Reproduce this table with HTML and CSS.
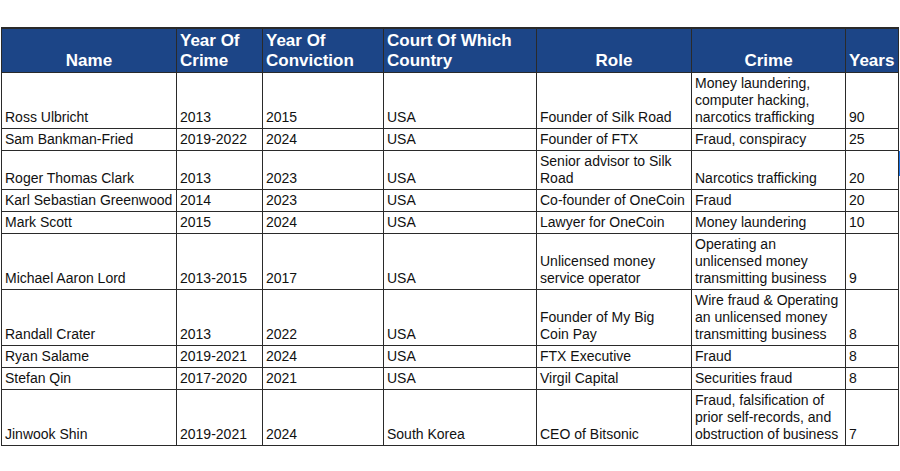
FILE: index.html
```html
<!DOCTYPE html>
<html lang="en">
<head>
<meta charset="utf-8">
<title>Crypto convictions</title>
<link rel="stylesheet" href="styles.css">
</head>
<body>
<div class="wrap">
<table class="sheet">
<colgroup>
<col class="c-name"><col class="c-yc"><col class="c-yv"><col class="c-court"><col class="c-role"><col class="c-crime"><col class="c-years">
</colgroup>
<thead>
<tr>
<th class="center">Name</th>
<th>Year Of<br>Crime</th>
<th>Year Of<br>Conviction</th>
<th>Court Of Which<br>Country</th>
<th class="center">Role</th>
<th class="center">Crime</th>
<th>Years</th>
</tr>
</thead>
<tbody>
<tr><td>Ross Ulbricht</td><td>2013</td><td>2015</td><td>USA</td><td>Founder of Silk Road</td><td>Money laundering,<br>computer hacking,<br>narcotics trafficking</td><td>90</td></tr>
<tr><td>Sam Bankman-Fried</td><td>2019-2022</td><td>2024</td><td>USA</td><td>Founder of FTX</td><td>Fraud, conspiracy</td><td>25</td></tr>
<tr><td>Roger Thomas Clark</td><td>2013</td><td>2023</td><td>USA</td><td>Senior advisor to Silk<br>Road</td><td>Narcotics trafficking</td><td class="sel">20</td></tr>
<tr><td>Karl Sebastian Greenwood</td><td>2014</td><td>2023</td><td>USA</td><td>Co-founder of OneCoin</td><td>Fraud</td><td>20</td></tr>
<tr><td>Mark Scott</td><td>2015</td><td>2024</td><td>USA</td><td>Lawyer for OneCoin</td><td>Money laundering</td><td>10</td></tr>
<tr><td>Michael Aaron Lord</td><td>2013-2015</td><td>2017</td><td>USA</td><td>Unlicensed money<br>service operator</td><td>Operating an<br>unlicensed money<br>transmitting business</td><td>9</td></tr>
<tr><td>Randall Crater</td><td>2013</td><td>2022</td><td>USA</td><td>Founder of My Big<br>Coin Pay</td><td>Wire fraud &amp; Operating<br>an unlicensed money<br>transmitting business</td><td>8</td></tr>
<tr><td>Ryan Salame</td><td>2019-2021</td><td>2024</td><td>USA</td><td>FTX Executive</td><td>Fraud</td><td>8</td></tr>
<tr><td>Stefan Qin</td><td>2017-2020</td><td>2021</td><td>USA</td><td>Virgil Capital</td><td>Securities fraud</td><td>8</td></tr>
<tr><td>Jinwook Shin</td><td>2019-2021</td><td>2024</td><td>South Korea</td><td>CEO of Bitsonic</td><td>Fraud, falsification of<br>prior self-records, and<br>obstruction of business</td><td>7</td></tr>
</tbody>
</table>
</div>
</body>
</html>
```
FILE: styles.css
```css
html, body {
  margin: 0;
  padding: 0;
  background: #ffffff;
}
.wrap {
  padding: 27px 0 0 1px;
}
.sheet {
  border-collapse: collapse;
  table-layout: fixed;
  width: 897px;
  font-family: "Liberation Sans", Arial, sans-serif;
  color: #111;
}
.c-name { width: 175px; }
.c-yc { width: 86px; }
.c-yv { width: 121px; }
.c-court { width: 153px; }
.c-role { width: 155px; }
.c-crime { width: 154px; }
.c-years { width: 53px; }
.sheet th {
  background: #1c4587;
  color: #ffffff;
  font-weight: bold;
  font-size: 17px;
  line-height: 20px;
  text-align: left;
  vertical-align: bottom;
  padding: 2px 3px 1px 3px;
  border: 1px solid #2a2a2a;
  border-top: 2px solid #2a2a2a;
  white-space: nowrap;
  overflow: hidden;
}
.sheet th.center {
  text-align: center;
}
.sheet td {
  font-size: 14px;
  line-height: 17px;
  padding: 2px 3px 2px 3px;
  border: 1px solid #2a2a2a;
  vertical-align: bottom;
  white-space: nowrap;
  overflow: hidden;
}
.sheet td.sel {
  position: relative;
  overflow: visible;
}
.sheet td.sel::after {
  content: "";
  position: absolute;
  right: -3px;
  top: 0;
  width: 2px;
  height: 25px;
  background: #1a73e8;
}
```
